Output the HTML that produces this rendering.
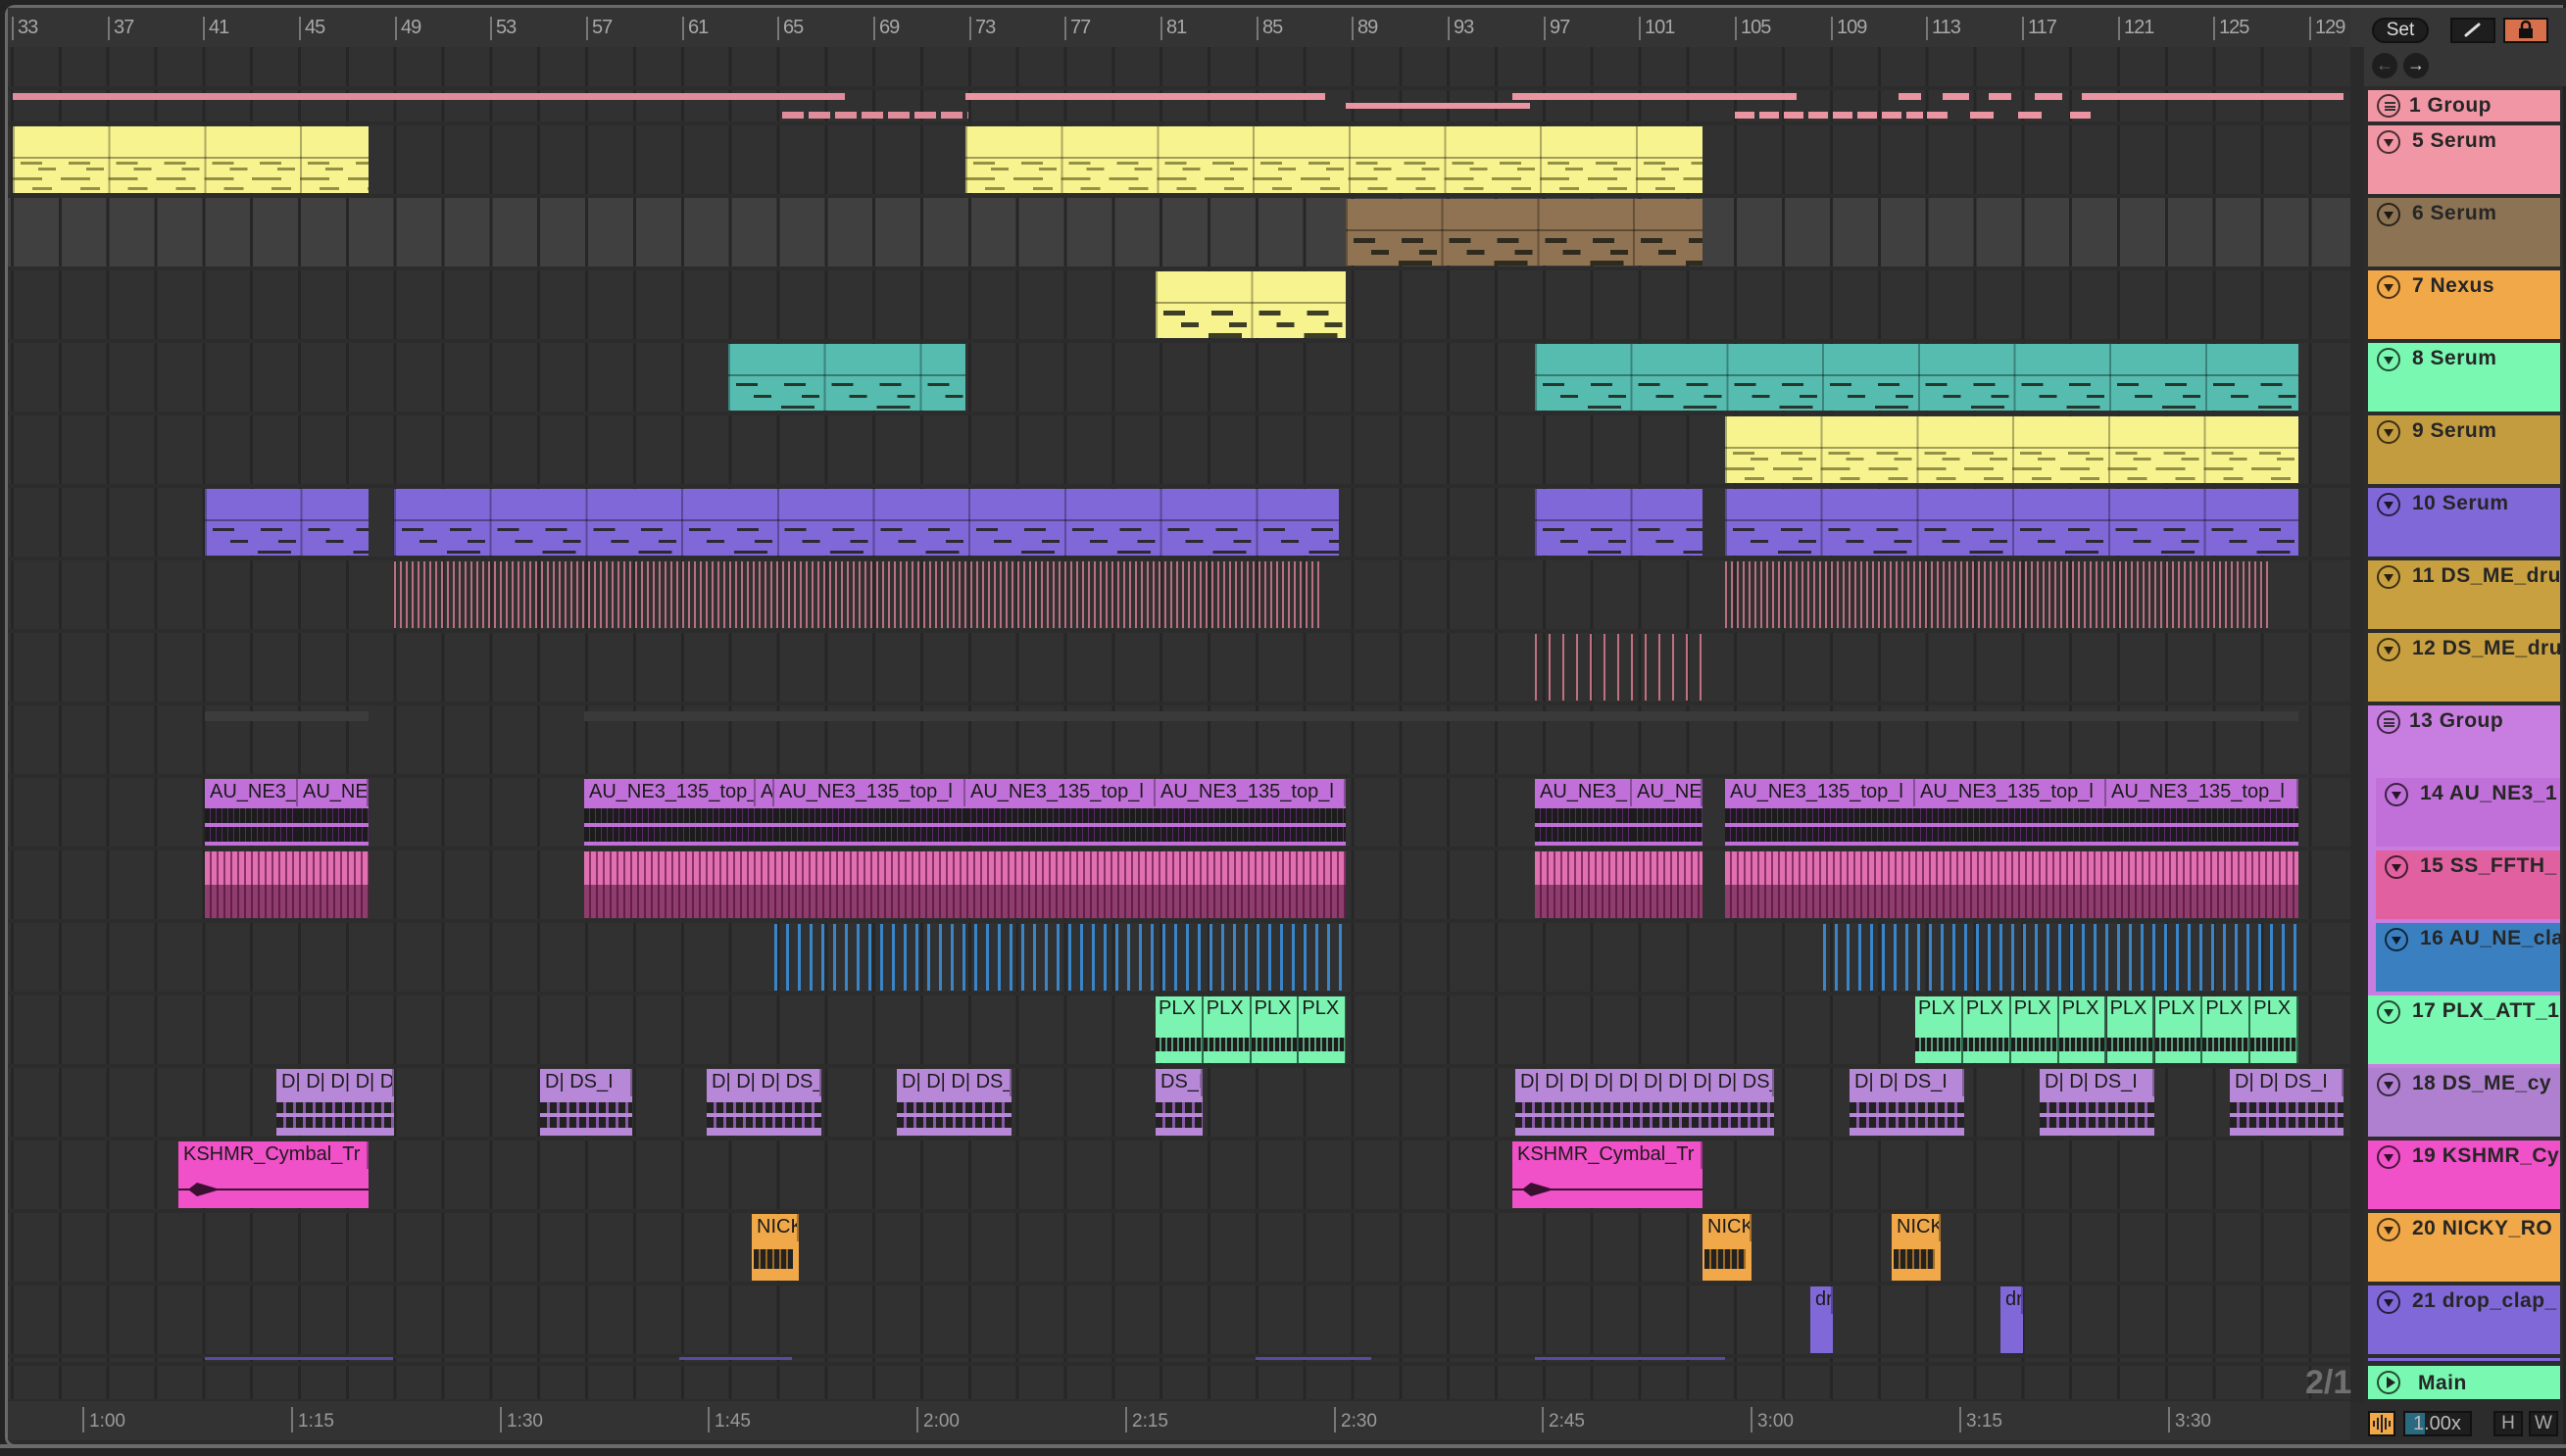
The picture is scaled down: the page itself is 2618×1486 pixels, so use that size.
<!DOCTYPE html>
<html><head><meta charset="utf-8"><style>
*{margin:0;padding:0;box-sizing:border-box}
body{width:2618px;height:1486px;background:#242424;position:relative;overflow:hidden;font-family:"Liberation Sans",sans-serif}
.a{position:absolute}
.frame{position:absolute;left:5px;top:5px;width:2610px;height:1472px;border:3px solid #6a6a6a;border-right:none;border-radius:10px 0 0 10px;background:#2c2c2c}
.ruler{position:absolute;left:8px;top:8px;width:2390px;height:40px;background:#343434}
.rn{position:absolute;top:17px;font-size:20px;color:#a8a8a8;letter-spacing:-1px;border-left:2px solid #777;padding-left:4px;line-height:22px;height:24px}
.grid{position:absolute;left:8px;width:2390px;background-color:#313131;background-image:repeating-linear-gradient(90deg,#262626 0 3px,transparent 3px 48.84px);background-position:3px 0}
.clip{position:absolute;overflow:hidden}
.mid{background-image:
 repeating-linear-gradient(90deg,transparent 0 8px,rgba(30,30,20,.85) 8px 30px,transparent 30px 48.84px),
 repeating-linear-gradient(90deg,transparent 0 26px,rgba(30,30,20,.85) 26px 44px,transparent 44px 48.84px),
 repeating-linear-gradient(90deg,transparent 0 54px,rgba(30,30,20,.85) 54px 88px,transparent 88px 97.7px),
 linear-gradient(rgba(0,0,0,.35),rgba(0,0,0,.35)),
 repeating-linear-gradient(90deg,rgba(0,0,0,.3) 0 2px,transparent 2px 97.7px);
 background-size:100% 5px,100% 5px,100% 5px,100% 2px,100% 100%;
 background-position:0 40px,0 52px,0 63px,0 31px,0 0;
 background-repeat:no-repeat}
.thin{background-image:
 repeating-linear-gradient(90deg,transparent 0 8px,rgba(80,80,20,.6) 8px 30px,transparent 30px 48.84px),
 repeating-linear-gradient(90deg,transparent 0 26px,rgba(80,80,20,.6) 26px 44px,transparent 44px 48.84px),
 repeating-linear-gradient(90deg,rgba(80,80,20,.6) 0 30px,transparent 30px 48.84px),
 repeating-linear-gradient(90deg,transparent 0 20px,rgba(80,80,20,.6) 20px 40px,transparent 40px 48.84px),
 linear-gradient(rgba(0,0,0,.35),rgba(0,0,0,.35)),
 repeating-linear-gradient(90deg,rgba(0,0,0,.3) 0 2px,transparent 2px 97.7px);
 background-size:100% 3px,100% 3px,100% 3px,100% 3px,100% 2px,100% 100%;
 background-position:0 36px,0 42px,0 52px,0 62px,0 31px,0 0;
 background-repeat:no-repeat}
.lab{position:absolute;left:0;top:0;right:0;height:28px;font-size:20px;line-height:26px;padding-left:5px;color:#1b1b1b;white-space:nowrap;overflow:hidden;border-right:2px solid rgba(0,0,0,.3)}
.hd{position:absolute;left:2416px;width:196px;height:70px}
.hd .ic{position:absolute;left:9px;top:5px;width:24px;height:24px;border:2px solid rgba(0,0,0,.7);border-radius:50%}
.hd .ic::after{content:"";position:absolute;left:5px;top:7px;border-left:5px solid transparent;border-right:5px solid transparent;border-top:8px solid rgba(0,0,0,.8)}
.hd .ic.g::after{display:none}
.hd .t{position:absolute;left:45px;top:4px;font-size:21px;font-weight:bold;color:#262626;letter-spacing:.5px;white-space:nowrap}
.tl{position:absolute;top:1436px;font-size:19px;color:#9a9a9a;border-left:2px solid #777;padding-left:5px;height:26px;line-height:30px}
.btn{position:absolute;background:#1e1e1e;border:2px solid #111}
.wv{position:absolute;left:0;right:0;top:30px;height:34px;background:
 linear-gradient(#c070d8,#c070d8) 0 15px/100% 4px no-repeat,
 repeating-linear-gradient(90deg,#1c1c1c 0 5px,#5a2a6a 5px 6px)}
.pk{background:linear-gradient(180deg,transparent 0 50%,rgba(60,10,40,.5) 50% 100%),repeating-linear-gradient(90deg,#e070b0 0 5px,#8a3068 5px 7px)}
.plx{position:absolute;top:0;width:48.8px;height:68px;background:#7af4b0;border-right:2px solid #2a6a4a;font-size:20px;line-height:24px;padding-left:3px;color:#1b1b1b;overflow:hidden;white-space:nowrap}
.plx::after{content:"";position:absolute;left:0;right:0;top:42px;height:14px;background:repeating-linear-gradient(90deg,#1c1c1c 0 4px,#5aa07a 4px 6px)}
.ds .wv2{position:absolute;left:0;right:0;top:34px;height:26px;background:linear-gradient(#b888d8,#b888d8) 0 11px/100% 4px no-repeat,repeating-linear-gradient(90deg,#222 0 7px,#8a5aa8 7px 10px)}
</style></head><body>
<div class="frame"></div>
<div class="ruler"></div>
<div class="rn" style="left:12px">33</div><div class="rn" style="left:110px">37</div><div class="rn" style="left:207px">41</div><div class="rn" style="left:305px">45</div><div class="rn" style="left:403px">49</div><div class="rn" style="left:500px">53</div><div class="rn" style="left:598px">57</div><div class="rn" style="left:696px">61</div><div class="rn" style="left:793px">65</div><div class="rn" style="left:891px">69</div><div class="rn" style="left:989px">73</div><div class="rn" style="left:1086px">77</div><div class="rn" style="left:1184px">81</div><div class="rn" style="left:1282px">85</div><div class="rn" style="left:1379px">89</div><div class="rn" style="left:1477px">93</div><div class="rn" style="left:1575px">97</div><div class="rn" style="left:1672px">101</div><div class="rn" style="left:1770px">105</div><div class="rn" style="left:1868px">109</div><div class="rn" style="left:1965px">113</div><div class="rn" style="left:2063px">117</div><div class="rn" style="left:2161px">121</div><div class="rn" style="left:2258px">125</div><div class="rn" style="left:2356px">129</div>

<div class="a" style="left:2398px;top:8px;width:220px;height:80px;background:#363636"></div>
<div class="a" style="left:2420px;top:18px;width:58px;height:26px;border-radius:13px;background:#1e1e1e;border:2px solid #111;color:#ddd;font-size:19px;text-align:center;line-height:22px">Set</div>
<div class="btn" style="left:2500px;top:18px;width:46px;height:26px"><svg width="42" height="22"><line x1="14" y1="16" x2="27" y2="5" stroke="#ddd" stroke-width="3" stroke-linecap="round"/></svg></div>
<div class="btn" style="left:2554px;top:18px;width:46px;height:26px;background:#d8704c"><svg width="42" height="22"><rect x="14" y="9" width="14" height="10" fill="#111"/><path d="M17 10V6a4 4 0 0 1 8 0v4" stroke="#111" stroke-width="2.5" fill="none"/></svg></div>
<div class="a" style="left:2420px;top:54px;width:26px;height:26px;border-radius:50%;background:#1e1e1e;color:#666;font-size:18px;text-align:center;line-height:25px">&#8592;</div>
<div class="a" style="left:2452px;top:54px;width:26px;height:26px;border-radius:50%;background:#1e1e1e;color:#ddd;font-size:18px;text-align:center;line-height:25px">&#8594;</div>
<div class="a" style="left:2398px;top:48px;width:14px;height:1384px;background:#2a2a2a"></div>

<div class="grid" style="top:48px;height:40px"></div>
<div class="grid" style="top:92px;height:32px"></div>
<div class="grid" style="top:128px;height:70px"></div>
<div class="grid" style="top:202px;height:70px;background-color:#404040"></div>
<div class="grid" style="top:276px;height:70px"></div>
<div class="grid" style="top:350px;height:70px"></div>
<div class="grid" style="top:424px;height:70px"></div>
<div class="grid" style="top:498px;height:70px"></div>
<div class="grid" style="top:572px;height:70px"></div>
<div class="grid" style="top:646px;height:70px"></div>
<div class="grid" style="top:720px;height:70px"></div>
<div class="grid" style="top:794px;height:70px"></div>
<div class="grid" style="top:868px;height:70px"></div>
<div class="grid" style="top:942px;height:70px"></div>
<div class="grid" style="top:1016px;height:70px"></div>
<div class="grid" style="top:1090px;height:70px"></div>
<div class="grid" style="top:1164px;height:70px"></div>
<div class="grid" style="top:1238px;height:70px"></div>
<div class="grid" style="top:1312px;height:70px"></div>
<div class="grid" style="top:1386px;height:4px"></div>
<div class="grid" style="top:1394px;height:34px"></div>
<div class="a" style="left:8px;top:1430px;width:2390px;height:40px;background:#333"></div>

<div class="a" style="top:95px;height:7px;left:13px;width:849px;background:#e08c9a"></div>
<div class="a" style="top:95px;height:7px;left:985px;width:367px;background:#ec95a2"></div>
<div class="a" style="top:95px;height:7px;left:1543px;width:290px;background:#ec95a2"></div>
<div class="a" style="top:95px;height:7px;left:1937px;width:23px;background:#ec95a2"></div>
<div class="a" style="top:95px;height:7px;left:1982px;width:27px;background:#ec95a2"></div>
<div class="a" style="top:95px;height:7px;left:2029px;width:23px;background:#ec95a2"></div>
<div class="a" style="top:95px;height:7px;left:2076px;width:28px;background:#ec95a2"></div>
<div class="a" style="top:95px;height:7px;left:2124px;width:267px;background:#ec95a2"></div>
<div class="a" style="top:114px;height:7px;left:798px;width:190px;background:repeating-linear-gradient(90deg,#e08c9a 0 22px,transparent 22px 27px)"></div>
<div class="a" style="top:105px;height:6px;left:1373px;width:188px;background:#ec95a2"></div>
<div class="a" style="top:114px;height:7px;left:1770px;width:192px;background:repeating-linear-gradient(90deg,#ec95a2 0 20px,transparent 20px 25px)"></div>
<div class="a" style="top:114px;height:7px;left:1966px;width:21px;background:#ec95a2"></div>
<div class="a" style="top:114px;height:7px;left:2010px;width:24px;background:#ec95a2"></div>
<div class="a" style="top:114px;height:7px;left:2059px;width:24px;background:#ec95a2"></div>
<div class="a" style="top:114px;height:7px;left:2112px;width:21px;background:#ec95a2"></div>

<div class="clip thin" style="top:129px;height:68px;left:13px;width:363px;background-color:#f7f38e"></div>
<div class="clip thin" style="top:129px;height:68px;left:985px;width:752px;background-color:#f7f38e"></div>
<div class="clip mid" style="top:203px;height:68px;left:1373px;width:364px;background-color:#907352"></div>
<div class="clip mid" style="top:277px;height:68px;left:1179px;width:194px;background-color:#f7f38e"></div>
<div class="clip mid" style="top:351px;height:68px;left:743px;width:242px;background-color:#56bcb0;background-size:100% 3px,100% 3px,100% 3px,100% 2px,100% 100%"></div>
<div class="clip mid" style="top:351px;height:68px;left:1566px;width:779px;background-color:#56bcb0;background-size:100% 3px,100% 3px,100% 3px,100% 2px,100% 100%"></div>
<div class="clip thin" style="top:425px;height:68px;left:1760px;width:585px;background-color:#f7f38e"></div>
<div class="clip mid" style="top:499px;height:68px;left:209px;width:167px;background-color:#8068d8;background-size:100% 3px,100% 3px,100% 3px,100% 2px,100% 100%"></div>
<div class="clip mid" style="top:499px;height:68px;left:402px;width:964px;background-color:#8068d8;background-size:100% 3px,100% 3px,100% 3px,100% 2px,100% 100%"></div>
<div class="clip mid" style="top:499px;height:68px;left:1566px;width:171px;background-color:#8068d8;background-size:100% 3px,100% 3px,100% 3px,100% 2px,100% 100%"></div>
<div class="clip mid" style="top:499px;height:68px;left:1760px;width:585px;background-color:#8068d8;background-size:100% 3px,100% 3px,100% 3px,100% 2px,100% 100%"></div>
<div class="clip" style="top:573px;height:68px;left:402px;width:947px;background:repeating-linear-gradient(90deg,#b87080 0 2px,transparent 2px 6px)"></div>
<div class="clip" style="top:573px;height:68px;left:1760px;width:555px;background:repeating-linear-gradient(90deg,#b87080 0 2px,transparent 2px 6px)"></div>
<div class="clip" style="top:647px;height:68px;left:1566px;width:171px;background:repeating-linear-gradient(90deg,#c07080 0 2px,transparent 2px 14px)"></div>
<div class="a" style="top:726px;height:10px;left:209px;width:167px;background:#3c3c3c"></div>
<div class="a" style="top:726px;height:10px;left:596px;width:1749px;background:#3a3a3a"></div>

<div class="clip" style="top:795px;height:68px;left:209px;width:95px;background:#c070d8"><div class="lab">AU_NE3_</div><div class="wv"></div></div>
<div class="clip" style="top:795px;height:68px;left:304px;width:72px;background:#c070d8"><div class="lab">AU_NE</div><div class="wv"></div></div>
<div class="clip" style="top:795px;height:68px;left:596px;width:175px;background:#c070d8"><div class="lab">AU_NE3_135_top_l</div><div class="wv"></div></div>
<div class="clip" style="top:795px;height:68px;left:771px;width:19px;background:#c070d8"><div class="lab">A</div><div class="wv"></div></div>
<div class="clip" style="top:795px;height:68px;left:790px;width:195px;background:#c070d8"><div class="lab">AU_NE3_135_top_l</div><div class="wv"></div></div>
<div class="clip" style="top:795px;height:68px;left:985px;width:194px;background:#c070d8"><div class="lab">AU_NE3_135_top_l</div><div class="wv"></div></div>
<div class="clip" style="top:795px;height:68px;left:1179px;width:194px;background:#c070d8"><div class="lab">AU_NE3_135_top_l</div><div class="wv"></div></div>
<div class="clip" style="top:795px;height:68px;left:1566px;width:99px;background:#c070d8"><div class="lab">AU_NE3_</div><div class="wv"></div></div>
<div class="clip" style="top:795px;height:68px;left:1665px;width:72px;background:#c070d8"><div class="lab">AU_NE</div><div class="wv"></div></div>
<div class="clip" style="top:795px;height:68px;left:1760px;width:194px;background:#c070d8"><div class="lab">AU_NE3_135_top_l</div><div class="wv"></div></div>
<div class="clip" style="top:795px;height:68px;left:1954px;width:195px;background:#c070d8"><div class="lab">AU_NE3_135_top_l</div><div class="wv"></div></div>
<div class="clip" style="top:795px;height:68px;left:2149px;width:196px;background:#c070d8"><div class="lab">AU_NE3_135_top_l</div><div class="wv"></div></div>
<div class="clip pk" style="top:869px;height:68px;left:209px;width:167px"></div>
<div class="clip pk" style="top:869px;height:68px;left:596px;width:777px"></div>
<div class="clip pk" style="top:869px;height:68px;left:1566px;width:171px"></div>
<div class="clip pk" style="top:869px;height:68px;left:1760px;width:585px"></div>
<div class="clip" style="top:943px;height:68px;left:790px;width:583px;background:repeating-linear-gradient(90deg,#3a84c8 0 3px,transparent 3px 12px)"></div>
<div class="clip" style="top:943px;height:68px;left:1860px;width:485px;background:repeating-linear-gradient(90deg,#3a84c8 0 3px,transparent 3px 12px)"></div>
<div class="clip" style="top:1017px;height:68px;left:1179px;width:194px"><div class="plx" style="left:0">PLX</div><div class="plx" style="left:48.8px">PLX</div><div class="plx" style="left:97.6px">PLX</div><div class="plx" style="left:146.4px">PLX</div></div>
<div class="clip" style="top:1017px;height:68px;left:1954px;width:391px"><div class="plx" style="left:0">PLX</div><div class="plx" style="left:48.9px">PLX</div><div class="plx" style="left:97.8px">PLX</div><div class="plx" style="left:146.7px">PLX</div><div class="plx" style="left:195.6px">PLX</div><div class="plx" style="left:244.5px">PLX</div><div class="plx" style="left:293.4px">PLX</div><div class="plx" style="left:342.3px">PLX</div></div>
<div class="clip ds" style="top:1091px;height:68px;left:282px;width:120px;background:#b888d8"><div class="lab">D| D| D| D| D|</div><div class="wv2"></div></div>
<div class="clip ds" style="top:1091px;height:68px;left:551px;width:94px;background:#b888d8"><div class="lab">D| DS_I</div><div class="wv2"></div></div>
<div class="clip ds" style="top:1091px;height:68px;left:721px;width:117px;background:#b888d8"><div class="lab">D| D| D| DS_I</div><div class="wv2"></div></div>
<div class="clip ds" style="top:1091px;height:68px;left:915px;width:117px;background:#b888d8"><div class="lab">D| D| D| DS_I</div><div class="wv2"></div></div>
<div class="clip ds" style="top:1091px;height:68px;left:1179px;width:48px;background:#b888d8"><div class="lab">DS_I</div><div class="wv2"></div></div>
<div class="clip ds" style="top:1091px;height:68px;left:1546px;width:264px;background:#b888d8"><div class="lab">D| D| D| D| D| D| D| D| D| DS_N</div><div class="wv2"></div></div>
<div class="clip ds" style="top:1091px;height:68px;left:1887px;width:117px;background:#b888d8"><div class="lab">D| D| DS_I</div><div class="wv2"></div></div>
<div class="clip ds" style="top:1091px;height:68px;left:2081px;width:117px;background:#b888d8"><div class="lab">D| D| DS_I</div><div class="wv2"></div></div>
<div class="clip ds" style="top:1091px;height:68px;left:2275px;width:116px;background:#b888d8"><div class="lab">D| D| DS_I</div><div class="wv2"></div></div>
<div class="clip" style="top:1165px;height:68px;left:182px;width:194px;background:#f050c8"><div class="lab">KSHMR_Cymbal_Tr</div><div class="a" style="left:0;right:0;top:48px;height:2px;background:#3a1030"></div><div class="a" style="left:10px;top:42px;width:30px;height:14px;background:#3a1030;clip-path:polygon(0 50%,30% 0,100% 45%,100% 55%,30% 100%)"></div></div>
<div class="clip" style="top:1165px;height:68px;left:1543px;width:194px;background:#f050c8"><div class="lab">KSHMR_Cymbal_Tr</div><div class="a" style="left:0;right:0;top:48px;height:2px;background:#3a1030"></div><div class="a" style="left:10px;top:42px;width:30px;height:14px;background:#3a1030;clip-path:polygon(0 50%,30% 0,100% 45%,100% 55%,30% 100%)"></div></div>
<div class="clip" style="top:1239px;height:68px;left:767px;width:48px;background:#f0a848"><div class="lab">NICK</div><div class="a" style="left:2px;right:6px;top:36px;height:20px;background:repeating-linear-gradient(90deg,#222 0 5px,#a06a20 5px 7px)"></div></div>
<div class="clip" style="top:1239px;height:68px;left:1737px;width:50px;background:#f0a848"><div class="lab">NICK</div><div class="a" style="left:2px;right:6px;top:36px;height:20px;background:repeating-linear-gradient(90deg,#222 0 5px,#a06a20 5px 7px)"></div></div>
<div class="clip" style="top:1239px;height:68px;left:1930px;width:50px;background:#f0a848"><div class="lab">NICK</div><div class="a" style="left:2px;right:6px;top:36px;height:20px;background:repeating-linear-gradient(90deg,#222 0 5px,#a06a20 5px 7px)"></div></div>
<div class="clip" style="top:1313px;height:68px;left:1847px;width:23px;background:#8068d8"><div class="lab">dr</div></div>
<div class="clip" style="top:1313px;height:68px;left:2041px;width:23px;background:#8068d8"><div class="lab">dr</div></div>
<div class="a" style="top:1385px;height:3px;left:209px;width:192px;background:#5a4aa0"></div>
<div class="a" style="top:1385px;height:3px;left:693px;width:115px;background:#5a4aa0"></div>
<div class="a" style="top:1385px;height:3px;left:1281px;width:118px;background:#5a4aa0"></div>
<div class="a" style="top:1385px;height:3px;left:1566px;width:194px;background:#5a4aa0"></div>
<div class="a" style="left:2352px;top:1392px;font-size:34px;font-weight:bold;color:#707070">2/1</div>

<div class="tl" style="left:84px">1:00</div><div class="tl" style="left:297px">1:15</div><div class="tl" style="left:510px">1:30</div><div class="tl" style="left:722px">1:45</div><div class="tl" style="left:935px">2:00</div><div class="tl" style="left:1148px">2:15</div><div class="tl" style="left:1361px">2:30</div><div class="tl" style="left:1573px">2:45</div><div class="tl" style="left:1786px">3:00</div><div class="tl" style="left:1999px">3:15</div><div class="tl" style="left:2212px">3:30</div>

<div class="hd" style="top:92px;height:32px;background:#f096a4"><div class="ic g" style="top:4px"></div><div class="a" style="left:17px;top:12px;width:11px;height:9px;border-top:2px solid #333;border-bottom:2px solid #333"></div><div class="a" style="left:17px;top:15.5px;width:11px;height:2px;background:#333"></div><div class="t" style="top:4px;left:42px">1 Group</div></div>
<div class="hd" style="top:128px;background:#f096a4"><div class="ic"></div><div class="t">5 Serum</div></div>
<div class="hd" style="top:202px;background:#8b7354"><div class="ic"></div><div class="t">6 Serum</div></div>
<div class="hd" style="top:276px;background:#f0a848"><div class="ic"></div><div class="t">7 Nexus</div></div>
<div class="hd" style="top:350px;background:#78f8b0"><div class="ic"></div><div class="t">8 Serum</div></div>
<div class="hd" style="top:424px;background:#c49c40"><div class="ic"></div><div class="t">9 Serum</div></div>
<div class="hd" style="top:498px;background:#8068d8"><div class="ic"></div><div class="t">10 Serum</div></div>
<div class="hd" style="top:572px;background:#c8a040"><div class="ic"></div><div class="t">11 DS_ME_dru</div></div>
<div class="hd" style="top:646px;background:#c8a040"><div class="ic"></div><div class="t">12 DS_ME_dru</div></div>
<div class="hd" style="top:720px;background:#c87ee0;height:394px"><div class="ic g"></div><div class="a" style="left:16px;top:13px;width:11px;height:9px;border-top:2px solid #333;border-bottom:2px solid #333"></div><div class="a" style="left:16px;top:16.5px;width:11px;height:2px;background:#333"></div><div class="t" style="left:42px">13 Group</div></div>
<div class="hd" style="top:794px;left:2424px;width:188px;background:#c070d8"><div class="ic"></div><div class="t">14 AU_NE3_1</div></div>
<div class="hd" style="top:868px;left:2424px;width:188px;background:#e060a0"><div class="ic"></div><div class="t">15 SS_FFTH_</div></div>
<div class="hd" style="top:942px;left:2424px;width:188px;background:#3a80c0"><div class="ic"></div><div class="t">16 AU_NE_cla</div></div>
<div class="hd" style="top:1016px;background:#78f8b0"><div class="ic"></div><div class="t">17 PLX_ATT_1</div></div>
<div class="hd" style="top:1090px;background:#b080d0"><div class="ic"></div><div class="t">18 DS_ME_cy</div></div>
<div class="hd" style="top:1164px;background:#f050c8"><div class="ic"></div><div class="t">19 KSHMR_Cy</div></div>
<div class="hd" style="top:1238px;background:#f0a848"><div class="ic"></div><div class="t">20 NICKY_RO</div></div>
<div class="hd" style="top:1312px;background:#8068d8"><div class="ic"></div><div class="t">21 drop_clap_</div></div>
<div class="a" style="left:2416px;top:1386px;width:196px;height:3px;background:#8068d8"></div>
<div class="hd" style="top:1394px;height:34px;background:#78f8b0"><div class="ic g" style="top:5px"></div><div class="a" style="left:19px;top:11px;border-top:6px solid transparent;border-bottom:6px solid transparent;border-left:9px solid #222"></div><div class="t" style="left:51px;top:6px">Main</div></div>

<div class="a" style="left:2416px;top:1440px;width:28px;height:26px;background:#f0a848;border:2px solid #111"><svg width="24" height="22"><path d="M4 8v6M8 5v12M12 2v18M16 5v12M20 8v6" stroke="#222" stroke-width="2"/></svg></div>
<div class="btn" style="left:2452px;top:1440px;width:70px;height:26px;color:#bbb;font-size:20px;line-height:22px;padding-left:8px"><div class="a" style="left:0;top:0;width:20px;height:22px;background:#2a6a80"></div><span style="position:relative">1.00x</span></div>
<div class="btn" style="left:2544px;top:1440px;width:30px;height:26px;color:#aaa;font-size:19px;text-align:center;line-height:22px">H</div>
<div class="btn" style="left:2580px;top:1440px;width:30px;height:26px;color:#aaa;font-size:19px;text-align:center;line-height:22px">W</div>
<div class="a" style="left:0;top:1474px;width:2618px;height:4px;background:#6a6a6a"></div>
</body></html>
